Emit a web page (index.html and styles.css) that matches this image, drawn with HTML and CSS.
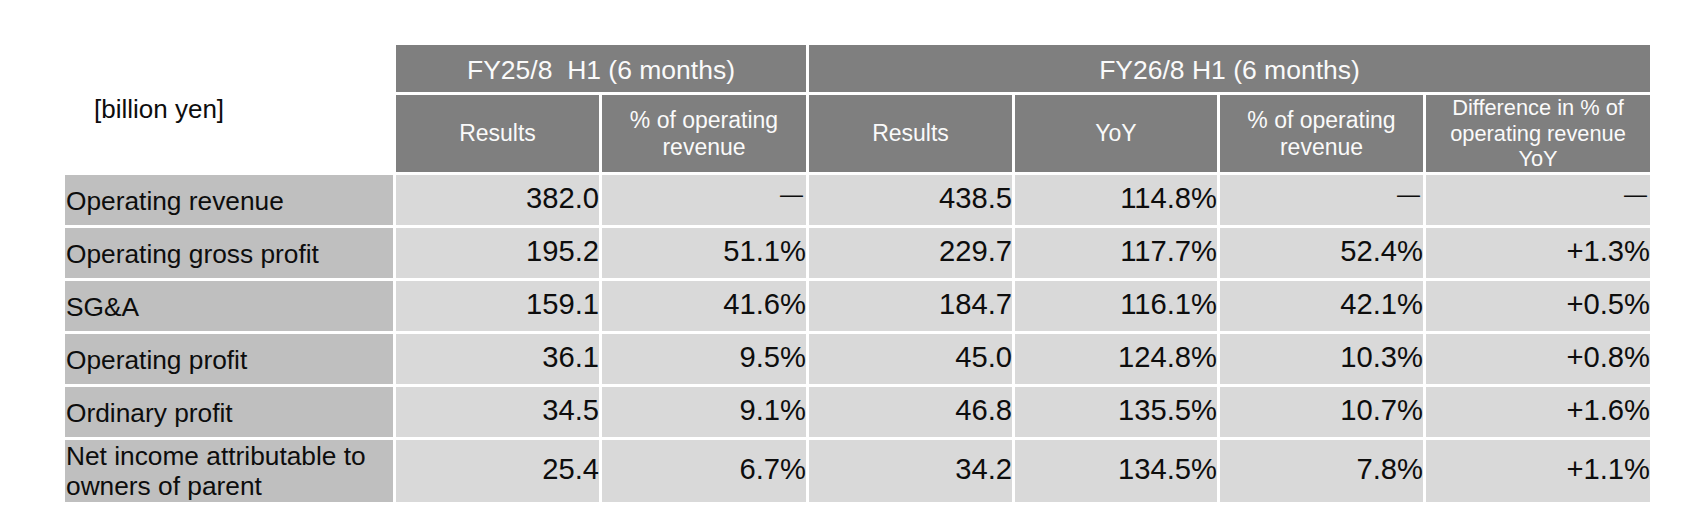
FILE: index.html
```html
<!DOCTYPE html>
<html lang="en">
<head>
<meta charset="utf-8">
<title>H1 results</title>
<link rel="stylesheet" href="styles.css">
</head>
<body>
<table class="fin">
  <colgroup>
    <col class="c-label">
    <col class="c-num">
    <col class="c-num2">
    <col class="c-num">
    <col class="c-num3">
    <col class="c-num">
    <col class="c-last">
  </colgroup>
  <thead>
    <tr class="hrow1">
      <th rowspan="2" class="unit">[billion yen]</th>
      <th colspan="2" class="period">FY25/8&nbsp; H1 (6 months)</th>
      <th colspan="4" class="period">FY26/8 H1 (6 months)</th>
    </tr>
    <tr class="hrow2">
      <th class="sub">Results</th>
      <th class="sub">% of operating<br>revenue</th>
      <th class="sub">Results</th>
      <th class="sub">YoY</th>
      <th class="sub">% of operating<br>revenue</th>
      <th class="sub diff">Difference in % of<br>operating revenue<br>YoY</th>
    </tr>
  </thead>
  <tbody>
    <tr>
      <th class="label">Operating revenue</th>
      <td class="num">382.0</td>
      <td class="num"><span class="dash">—</span></td>
      <td class="num">438.5</td>
      <td class="num">114.8%</td>
      <td class="num"><span class="dash">—</span></td>
      <td class="num"><span class="dash">—</span></td>
    </tr>
    <tr>
      <th class="label">Operating gross profit</th>
      <td class="num">195.2</td>
      <td class="num">51.1%</td>
      <td class="num">229.7</td>
      <td class="num">117.7%</td>
      <td class="num">52.4%</td>
      <td class="num">+1.3%</td>
    </tr>
    <tr>
      <th class="label">SG&amp;A</th>
      <td class="num">159.1</td>
      <td class="num">41.6%</td>
      <td class="num">184.7</td>
      <td class="num">116.1%</td>
      <td class="num">42.1%</td>
      <td class="num">+0.5%</td>
    </tr>
    <tr>
      <th class="label">Operating profit</th>
      <td class="num">36.1</td>
      <td class="num">9.5%</td>
      <td class="num">45.0</td>
      <td class="num">124.8%</td>
      <td class="num">10.3%</td>
      <td class="num">+0.8%</td>
    </tr>
    <tr>
      <th class="label">Ordinary profit</th>
      <td class="num">34.5</td>
      <td class="num">9.1%</td>
      <td class="num">46.8</td>
      <td class="num">135.5%</td>
      <td class="num">10.7%</td>
      <td class="num">+1.6%</td>
    </tr>
    <tr class="tall">
      <th class="label">Net income attributable to<br>owners of parent</th>
      <td class="num">25.4</td>
      <td class="num">6.7%</td>
      <td class="num">34.2</td>
      <td class="num">134.5%</td>
      <td class="num">7.8%</td>
      <td class="num">+1.1%</td>
    </tr>
  </tbody>
</table>
</body>
</html>
```
FILE: styles.css
```css
html, body {
  margin: 0;
  padding: 0;
  background: #ffffff;
}

body {
  font-family: "Liberation Sans", Arial, sans-serif;
  color: #0d0d0d;
}

.fin {
  table-layout: fixed;
  border-collapse: separate;
  border-spacing: 3px;
  width: 1591px;
  margin: 42px 0 0 62px;
}

.c-label { width: 328px; }
.c-num { width: 203px; }
.c-num2 { width: 204px; }
.c-num3 { width: 202px; }
.c-last { width: 224px; }

.fin th,
.fin td {
  padding: 0;
  vertical-align: middle;
  overflow: visible;
  white-space: nowrap;
  font-weight: normal;
}

.fin .hrow1 { height: 47px; }
.fin .hrow2 { height: 77px; }
.fin tbody tr { height: 50px; }
.fin tbody tr.tall { height: 62px; }

.fin .unit {
  background: #ffffff;
  color: #0d0d0d;
  font-size: 26px;
  text-align: left;
  padding-left: 29px;
  padding-top: 2px;
}

.fin .period {
  background: #7f7f7f;
  color: #fafafa;
  font-size: 26.5px;
  text-align: center;
  padding-top: 3px;
}

.fin .sub {
  background: #7f7f7f;
  color: #fafafa;
  font-size: 23px;
  line-height: 26.7px;
  text-align: center;
}

.fin .sub.diff {
  font-size: 21.8px;
  line-height: 25.6px;
}

.fin .label {
  background: #bfbfbf;
  color: #0d0d0d;
  font-size: 26.3px;
  line-height: 30px;
  text-align: left;
  padding-left: 1px;
  padding-top: 2px;
}

.fin .tall .label {
  padding-top: 0;
}

.fin .num {
  background: #d9d9d9;
  color: #0d0d0d;
  font-size: 29.2px;
  text-align: right;
  padding-right: 0;
  padding-bottom: 4px;
}

.dash {
  display: inline-block;
  font-size: 23px;
  vertical-align: 0.3em;
  margin-right: 3px;
}
```
